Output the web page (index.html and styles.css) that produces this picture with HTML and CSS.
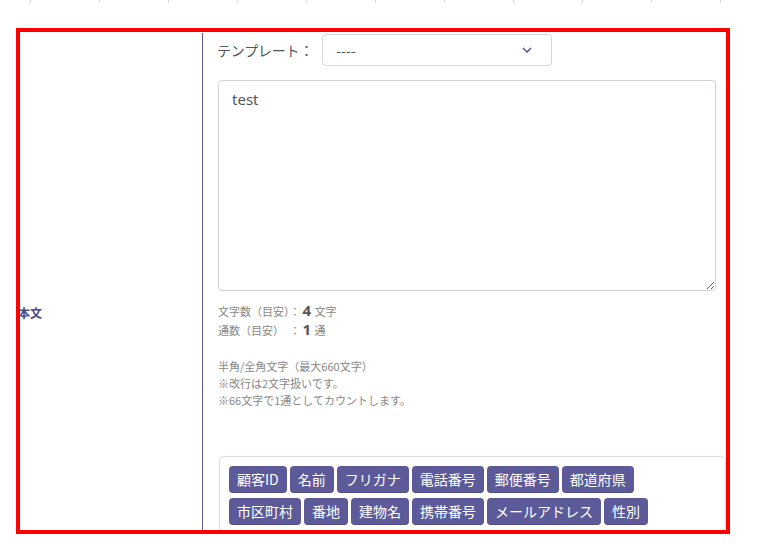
FILE: index.html
```html
<!DOCTYPE html>
<html lang="ja">
<head>
<meta charset="utf-8">
<link rel="stylesheet" href="styles.css">
</head>
<body>
<div class="ticks"></div>
<div class="frame">
  <div class="label-cell"><span class="label">本文</span></div>
  <div class="field-cell">
    <div class="template-row">
      <span class="template-label">テンプレート：</span>
      <div class="select">
        <span>----</span>
        <svg class="chev" width="10" height="6" viewBox="0 0 10 6"><polyline points="1,1 5,5 9,1" fill="none" stroke="#5d5a9c" stroke-width="1.6"/></svg>
      </div>
    </div>
    <textarea class="body-text">test</textarea>
    <div class="counts">
      <div class="count-line">文字数（目安）：<b>4</b> 文字</div>
      <div class="count-line">通数（目安）　：<b>1</b> 通</div>
    </div>
    <div class="notes">
      <div>半角/全角文字（最大660文字）</div>
      <div>※改行は2文字扱いです。</div>
      <div>※66文字で1通としてカウントします。</div>
    </div>
    <div class="tags">
      <div class="tag-row">
        <span class="tag">顧客ID</span><span class="tag">名前</span><span class="tag">フリガナ</span><span class="tag">電話番号</span><span class="tag">郵便番号</span><span class="tag">都道府県</span>
      </div>
      <div class="tag-row">
        <span class="tag">市区町村</span><span class="tag">番地</span><span class="tag">建物名</span><span class="tag">携帯番号</span><span class="tag">メールアドレス</span><span class="tag">性別</span>
      </div>
    </div>
  </div>
</div>
</body>
</html>
```
FILE: styles.css
```css
html, body {
  margin: 0;
  padding: 0;
  background: #fff;
  font-family: "Noto Sans CJK JP", "Noto Sans", sans-serif;
  width: 783px;
  height: 544px;
  overflow: hidden;
}
.ticks {
  height: 3px;
  background-image: repeating-linear-gradient(to right, transparent 0, transparent 68px, #d9d9d9 68px, #d9d9d9 69px);
  background-position: -38px 0;
}
.frame {
  margin: 25px 0 0 16px;
  width: 706px;
  height: 498px;
  border: 4px solid #ff0000;
  overflow: hidden;
  display: grid;
  grid-template-columns: 182px 1fr;
}
.label {
  display: block;
  margin: 273px 0 0 -2px;
  font-size: 12px;
  font-weight: bold;
  color: #4b4a8e;
  line-height: 16px;
}
.field-cell {
  border-left: 1px solid #5d5a9c;
  margin-top: 1px;
  padding-left: 14px;
}
.template-row {
  display: flex;
  align-items: center;
  margin-top: 1px;
  gap: 9px;
}
.template-label {
  font-size: 14px;
  color: #555;
  letter-spacing: -0.2px;
}
.select {
  box-sizing: border-box;
  width: 230px;
  height: 32px;
  border: 1px solid #d3d7de;
  border-radius: 4px;
  display: flex;
  align-items: center;
  justify-content: space-between;
  padding: 0 19px 0 13px;
  font-size: 14px;
  color: #555;
}
.chev {
  display: block;
}
.body-text {
  display: block;
  box-sizing: border-box;
  margin: 14px 0 0 1px;
  width: 498px;
  height: 211px;
  border: 1px solid #cfd3da;
  border-radius: 4px;
  padding: 8px 13px;
  font-family: "Noto Sans", "Noto Sans CJK JP", sans-serif;
  font-size: 15px;
  color: #555;
  outline: none;
}
.counts {
  margin: 10px 0 0 1px;
  font-size: 11px;
  color: #888;
}
.count-line {
  line-height: 18px;
}
.count-line b {
  font-size: 15px;
  color: #555;
  font-family: "Noto Sans", sans-serif;
  margin: 0 1px 0 2px;
}
.notes {
  margin: 19px 0 0 1px;
  font-size: 11px;
  color: #888;
  line-height: 17px;
}
.tags {
  box-sizing: border-box;
  margin: 47px 0 0 2px;
  width: 507px;
  height: 90px;
  border: 1px solid #d8dce4;
  border-radius: 5px;
  padding: 9px 9px;
  display: flex;
  flex-direction: column;
  gap: 5px;
}
.tag-row {
  display: flex;
  gap: 3px;
}
.tag {
  background: #5d5a9a;
  color: #fff;
  font-size: 14px;
  height: 27px;
  line-height: 27px;
  padding: 0 8px;
  border-radius: 4px;
  box-shadow: inset 0 -1px 0 rgba(0,0,0,0.15);
}
```
